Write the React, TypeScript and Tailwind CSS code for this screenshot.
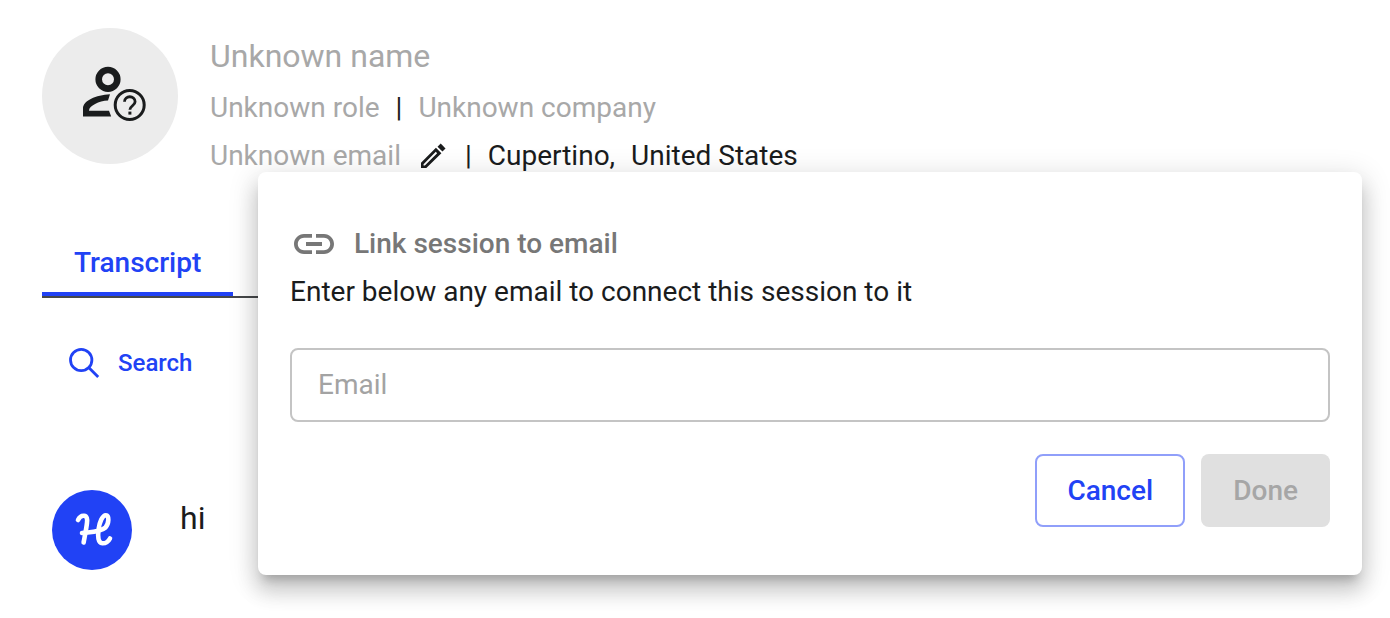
import { useState } from "react";

function PersonUnknownIcon() {
  return (
    <svg viewBox="-2 0 72 60" className="h-[60px] w-[72px]" fill="none" stroke="#1a1c1d" aria-hidden="true">
      <circle cx="32" cy="13.3" r="9.3" strokeWidth="6.6" />
      <path d="M34 28.2C20 29 7 34.5 7 42.5V50.5H35.2L33 44.700H13C13 39.800 23 34.900 32 34.500Z" fill="#1a1c1d" stroke="none" />
      <circle cx="53.7" cy="39" r="14.5" strokeWidth="3" />
      <path d="M48.500 35.700c0-6.600 10.600-6.600 10.600 0 0 3.800-5.200 4.300-5.200 8" strokeWidth="2.8" />
      <path d="M53.900 45.600v3" strokeWidth="3" />
    </svg>
  );
}

function PencilIcon() {
  return (
    <svg viewBox="0 0 24 24" className="size-8" fill="currentColor" aria-hidden="true">
      <path d="M3 21v-4L14.200 5.800l4.100 4.100L7 21zM4.900 19.100h1l9.200-9.200-1-1L4.900 18.100z" fillRule="evenodd" />
      <path d="M15.400 5l2.400-2.300 3.600 3.600L19.100 8.700z" />
    </svg>
  );
}

function LinkIcon() {
  return (
    <svg viewBox="0 0 24 24" className="size-12" fill="currentColor" aria-hidden="true">
      <path d="M3.900 12c0-1.710 1.390-3.100 3.100-3.100h4V7H7c-2.760 0-5 2.240-5 5s2.240 5 5 5h4v-1.900H7c-1.710 0-3.100-1.390-3.100-3.100zM8 13h8v-2H8v2zm9-6h-4v1.900h4c1.710 0 3.100 1.390 3.100 3.100s-1.390 3.100-3.100 3.100h-4V17h4c2.760 0 5-2.240 5-5s-2.240-5-5-5z" />
    </svg>
  );
}

function SearchIcon() {
  return (
    <svg viewBox="0 0 32 32" className="size-8" fill="none" stroke="currentColor" strokeWidth="2.8" aria-hidden="true">
      <circle cx="13.2" cy="13" r="10.7" />
      <path d="M20.700 20.500L30.200 30" />
    </svg>
  );
}

function ScriptLogo() {
  return (
    <svg viewBox="0 0 44 36" className="h-9 w-11" fill="none" stroke="#fff" strokeWidth="4.6" strokeLinecap="round" strokeLinejoin="round" aria-hidden="true">
      <path d="M8 8C9.500 5 11.500 3.500 14 3.800c3 .3 3.500 3 3 7C16.500 16 14.800 24 13.600 30.500" />
      <path d="M12 21c8-1 18-.5 23.500-5.500 3.500-4 4-12 .3-12.300-3.300 0-6.300 6.800-7.300 14.300-.8 7-.5 13.500 3.800 13.800 3.700.2 6.200-2 7.700-4.800" />
    </svg>
  );
}

export default function App() {
  const [email, setEmail] = useState("");

  return (
    <main className="relative bg-white px-[42px] pt-7 font-[Roboto,sans-serif] text-[28px] text-[#1a1c1d]">
      <header className="flex gap-8">
        <div className="flex size-[136px] shrink-0 items-center justify-center rounded-full bg-[#ececec]">
          <PersonUnknownIcon />
        </div>
        <div>
          <h1 className="text-[32px] leading-14 text-[#a8a8a8]">Unknown name</h1>
          <div className="flex items-center gap-4 leading-12 text-[#a8a8a8]">
            <span>Unknown role</span>
            <span className="text-[#1a1c1d]">|</span>
            <span>Unknown company</span>
          </div>
          <div className="flex items-center gap-4 leading-12">
            <span className="text-[#a8a8a8]">Unknown email</span>
            <button type="button" aria-label="Edit email">
              <PencilIcon />
            </button>
            <span>|</span>
            <span>Cupertino,</span>
            <span>United States</span>
          </div>
        </div>
      </header>

      <div role="tablist" className="mt-12 border-b-2 border-[#46484a]">
        <button type="button" role="tab" aria-selected="true" className="border-b-4 border-[#2142f5] px-8 pt-[11px] pb-[5px] leading-12 font-medium text-[#2142f5]">
          Transcript
        </button>
      </div>

      <button type="button" className="mt-[41px] ml-[26px] flex items-center gap-[18px] text-2xl leading-12 font-medium text-[#2142f5]">
        <SearchIcon />
        Search
      </button>

      <div className="mt-[103px] ml-[10px] flex gap-12 pb-12">
        <div className="flex size-20 items-center justify-center rounded-full bg-[#2142f5]">
          <ScriptLogo />
        </div>
        <p className="text-[32px] leading-14">hi</p>
      </div>

      <section
        role="dialog"
        aria-labelledby="link-title"
        className="absolute top-[172px] right-7 left-[258px] rounded-lg bg-white px-8 py-12 shadow-[0_10px_10px_-6px_rgba(0,0,0,0.2),0_16px_20px_2px_rgba(0,0,0,0.14),0_6px_28px_4px_rgba(0,0,0,0.12)]"
      >
        <h2 id="link-title" className="flex items-center gap-4 leading-12 font-medium text-[#777777]">
          <LinkIcon />
          Link session to email
        </h2>
        <p className="leading-12">Enter below any email to connect this session to it</p>
        <form onSubmit={(e) => e.preventDefault()}>
          <input
            type="email"
            aria-label="Email"
            placeholder="Email"
            value={email}
            onChange={(e) => setEmail(e.target.value)}
            className="mt-8 block h-[74px] w-full rounded-lg border-2 border-[#c4c4c4] px-[26px] pb-0.5 placeholder:text-[#a3a3a3]"
          />
          <div className="mt-8 flex justify-end gap-4 font-medium">
            <button type="button" className="h-[73px] min-w-[150px] rounded-lg border-2 border-[#909ffa] px-[30px] text-[#2142f5]">
              Cancel
            </button>
            <button type="submit" disabled={!email} className="h-[73px] rounded-lg bg-[#2142f5] px-8 text-white disabled:bg-[#e0e0e0] disabled:text-[#a6a6a6]">
              Done
            </button>
          </div>
        </form>
      </section>
    </main>
  );
}
